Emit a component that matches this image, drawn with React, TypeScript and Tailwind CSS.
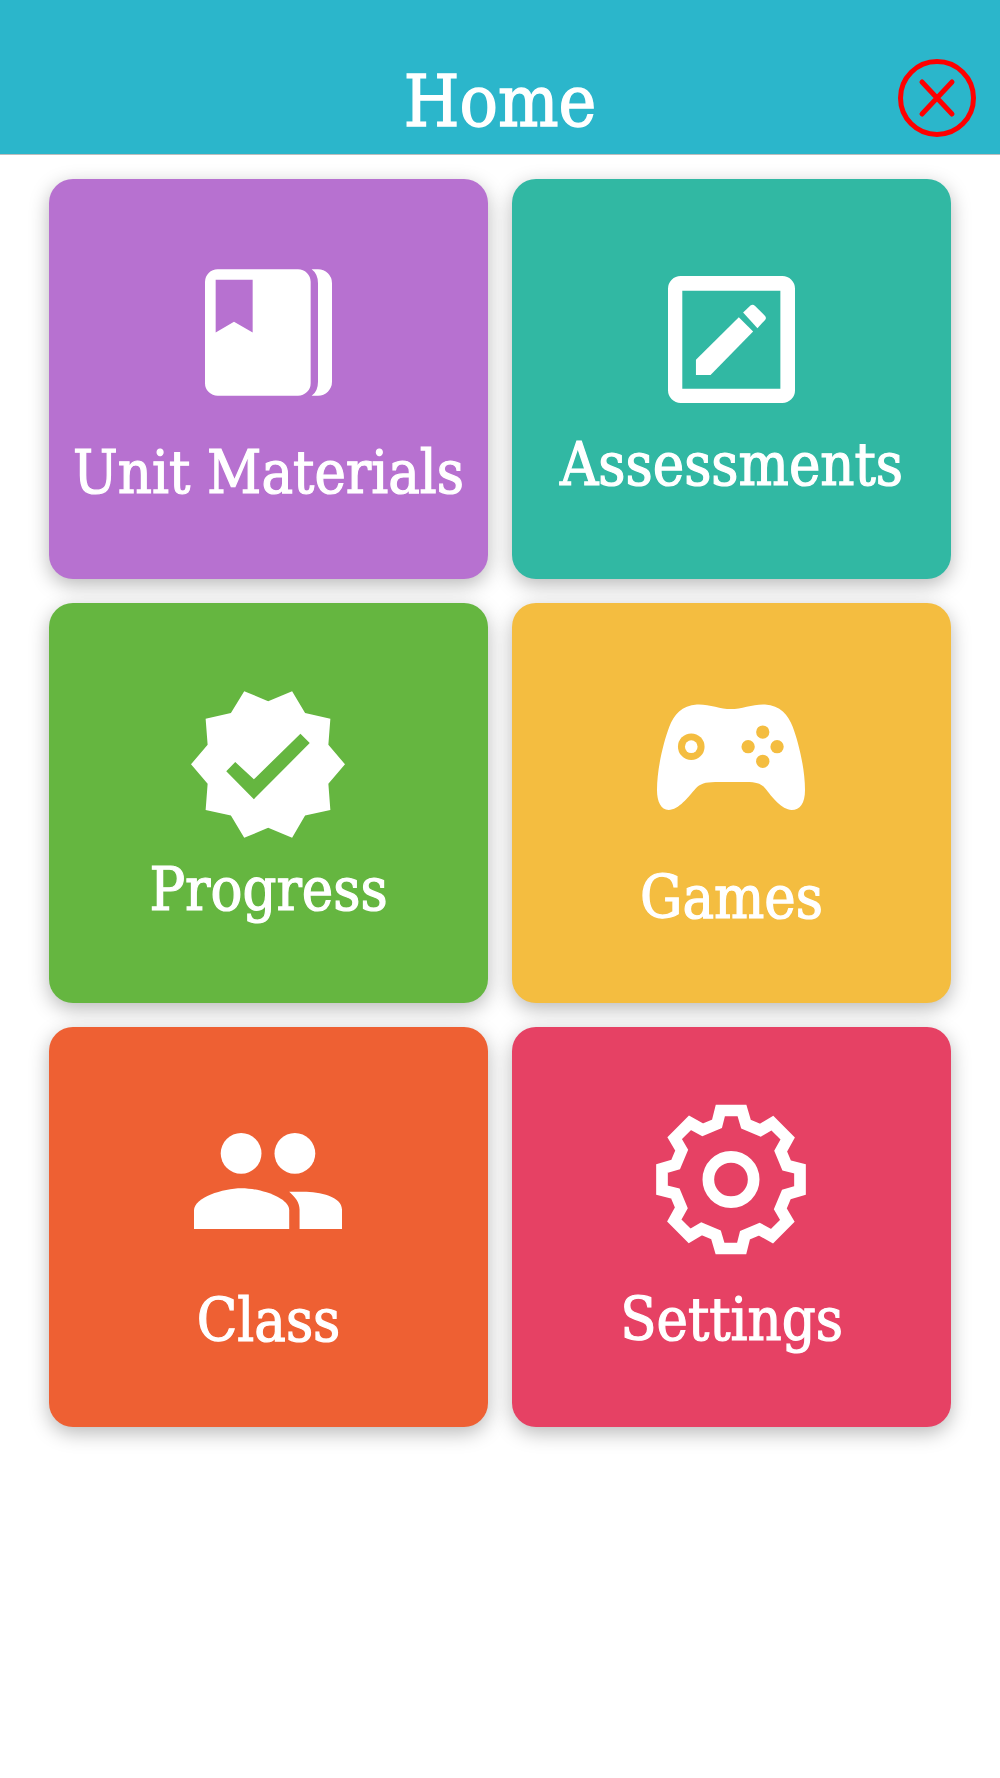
import type { ReactNode } from 'react'

/** Icons are traced by hand; each viewBox is the icon's own bounding box. */
function BookIcon() {
  return (
    <svg viewBox="103 58 381 380" className="mr-[1px] h-[127px] w-[127px] fill-white">
      <path
        fillRule="evenodd"
        d="M141 58H382A38 38 0 0 1 420 96V400A38 38 0 0 1 382 438H141A38 38 0 0 1 103 400V96A38 38 0 0 1 141 58ZM135 90V248L190 216L246 248V90Z"
      />
      <path d="M423 58H442A42 42 0 0 1 484 100V396A42 42 0 0 1 442 438H423Q442 425 442 396V100Q442 72 423 58Z" />
    </svg>
  )
}

function EditIcon() {
  return (
    <svg viewBox="52 48 382 382" className="mr-[1px] h-[127px] w-[127px] fill-white">
      <path
        fillRule="evenodd"
        d="M90 48H396A38 38 0 0 1 434 86V392A38 38 0 0 1 396 430H90A38 38 0 0 1 52 392V86A38 38 0 0 1 90 48ZM95 92V387H390V92Z"
      />
      <path d="M136 300L265 172L308 215L180 346H136Z" />
      <path d="M278 158L300 137Q307 132 314 138L344 168Q349 174 344 180L321 205Z" />
    </svg>
  )
}

function BadgeIcon() {
  return (
    <svg viewBox="48 47 463 441" className="mr-[2px] h-[147px] w-[154px] fill-white">
      <path
        fillRule="evenodd"
        d="M208 47L280 77L352 47L391 113L467 130L461 208L511 267L461 325L467 404L391 421L352 488L280 458L208 488L168 421L92 404L98 325L48 267L98 208L92 130L168 113ZM154 288L237 372L405 203L377 175L237 312L181 260Z"
      />
    </svg>
  )
}

function GamepadIcon() {
  return (
    <svg viewBox="50 57 445 318" className="mr-[2px] h-[106px] w-[148px]">
      <path
        className="fill-white"
        d="M170 58C205 56 240 72 272 72C305 72 340 56 375 58C420 60 445 90 458 125C475 170 495 250 495 315C495 355 480 375 455 375C425 375 395 335 375 310C362 295 350 292 320 291H225C195 292 180 295 165 312C145 335 115 375 85 375C62 375 50 350 50 315C50 250 70 170 87 125C100 90 125 60 170 58Z"
      />
      <g className="fill-[#f4bd40]">
        <circle cx="153" cy="185" r="40" />
        <circle cx="368" cy="141" r="20" />
        <circle cx="324" cy="185" r="20" />
        <circle cx="411" cy="185" r="20" />
        <circle cx="368" cy="229" r="20" />
      </g>
      <circle cx="153" cy="185" r="19" className="fill-white" />
    </svg>
  )
}

function PeopleIcon() {
  return (
    <svg viewBox="43 67 443 287" className="mr-[2px] h-[96px] w-[148px] fill-white">
      <circle cx="184" cy="128" r="61" />
      <circle cx="345" cy="128" r="61" />
      <path d="M43 354V298C43 260 130 232 185 232C240 232 328 260 328 298V354Z" />
      <path d="M328 243H370C420 243 486 258 486 296V354H359V296C359 275 345 258 328 243Z" />
    </svg>
  )
}

function GearIcon() {
  return (
    <svg viewBox="-225 -226 450 452" className="mr-[1px] h-[151px] w-[150px] fill-none stroke-white">
      <polygon
        strokeWidth="35"
        strokeLinejoin="miter"
        strokeMiterlimit="2"
        points="-32,-207 33,-207 45,-166 88,-148 124,-169 170,-123 149,-85 167,-42 207,-32 207,33 166,45 148,88 169,124 123,170 85,149 42,167 32,207 -33,207 -45,166 -88,148 -124,169 -170,123 -149,85 -167,42 -207,32 -207,-33 -166,-45 -148,-88 -169,-124 -123,-170 -85,-149 -42,-167"
      />
      <circle r="68" strokeWidth="35" />
    </svg>
  )
}

function CloseIcon() {
  return (
    <svg viewBox="0 0 78 78" className="h-[78px] w-[78px] fill-none stroke-[#ff0000]">
      <circle cx="39" cy="39" r="36.5" strokeWidth="5" />
      <path d="M24 23L54 55M54 23L24 55" strokeWidth="5" strokeLinecap="round" />
    </svg>
  )
}

interface TileProps {
  label: string
  icon: ReactNode
  /** Background colour plus the icon's top offset */
  className: string
  /** Gap between icon and label */
  labelClassName: string
}

function Tile({ label, icon, className, labelClassName }: TileProps) {
  return (
    <button
      type="button"
      className={`flex h-[400px] flex-col items-center rounded-3xl shadow-[0_6px_20px_rgba(0,0,0,0.28)] ${className}`}
    >
      {icon}
      <span className={`text-[59px] leading-[68px] text-white [-webkit-text-stroke:1.2px_white] ${labelClassName}`}>
        {label}
      </span>
    </button>
  )
}

export default function App() {
  return (
    <div className="min-h-[1778px] bg-white font-['DejaVu_Serif_Condensed','DejaVu_Serif',serif]">
      <header className="grid h-[155px] grid-cols-[1fr_auto_1fr] border-b border-[#bdbdbd] bg-[#2bb6cb] pt-[62px]">
        <div />
        <h1 className="text-[71px] leading-[80px] text-white [-webkit-text-stroke:1.4px_white]">Home</h1>
        <div className="-mt-[3px] flex justify-end pr-6">
          <button type="button" aria-label="Close" className="h-[78px] w-[78px]">
            <CloseIcon />
          </button>
        </div>
      </header>

      <main className="grid grid-cols-2 gap-6 px-[49px] pt-6">
        <Tile label="Unit Materials" icon={<BookIcon />} className="bg-[#b771d0] pt-[90px]" labelClassName="mt-[43px]" />
        <Tile label="Assessments" icon={<EditIcon />} className="bg-[#31b8a3] pt-[97px]" labelClassName="mt-[28px]" />
        <Tile label="Progress" icon={<BadgeIcon />} className="bg-[#65b640] pt-[88px]" labelClassName="mt-[18px]" />
        <Tile label="Games" icon={<GamepadIcon />} className="bg-[#f4bd40] pt-[101px]" labelClassName="mt-[54px]" />
        <Tile label="Class" icon={<PeopleIcon />} className="bg-[#ee6033] pt-[106px]" labelClassName="mt-[58px]" />
        <Tile label="Settings" icon={<GearIcon />} className="bg-[#e64164] pt-[77px]" labelClassName="mt-[31px]" />
      </main>
    </div>
  )
}
